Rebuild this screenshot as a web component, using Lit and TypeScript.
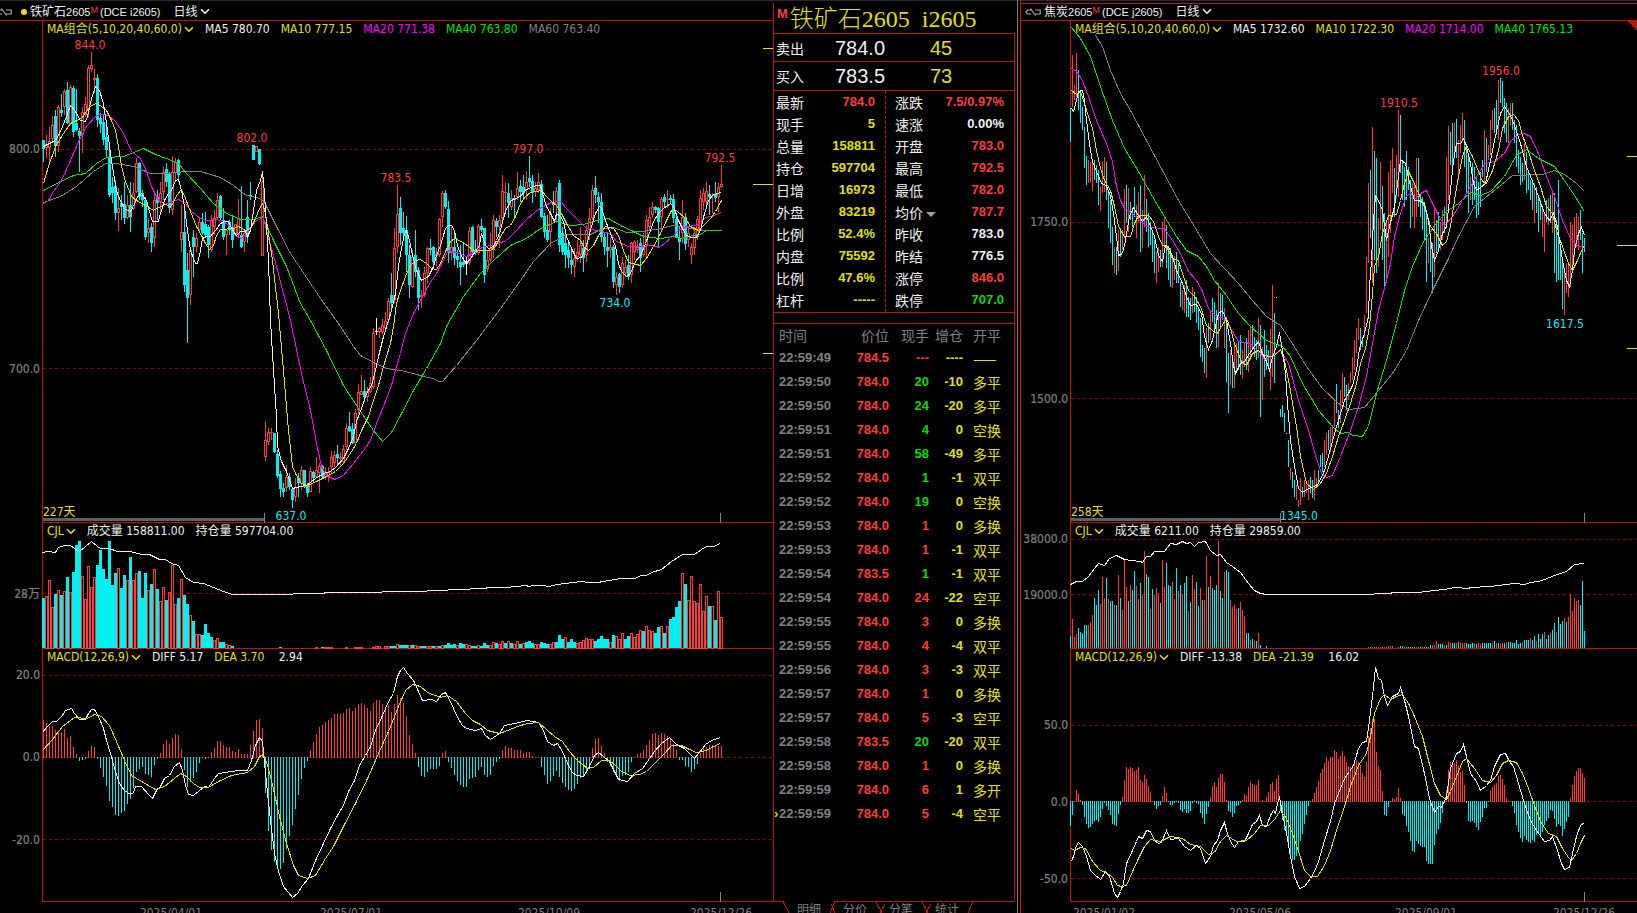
import { LitElement, html, svg, css } from "lit";
import { customElement, property } from "lit/decorators.js";

/* ---------- data types ---------- */

interface Scale {
  ox: number; // origin and units per pixel on each axis
  kx: number;
  oy: number;
  ky: number;
}
interface Trace {
  tone: string;
  scale: Scale;
  points: string;
}
interface Mark {
  text: string;
  tone: string;
  x: number;
  y: number;
}
interface Pane {
  top: number;
  height: number;
  legend: { text: string; tone: string; menu?: boolean }[];
  grid: { y: number; text: string }[];
  bars: Record<string, string>;
  traces: Trace[];
  marks: Mark[];
  ticks: number[];
  range?: { end: number; text: string };
  alerts?: { y: number; w: number }[];
}
interface ChartData {
  name: string;
  code: string;
  active: boolean;
  x0: number;
  width: number;
  panes: Pane[];
  dates: { x: number; text: string }[];
}

/* ---------- geometry helpers ---------- */

const rect = (x: number, y: number, w: number, h: number) =>
  h > 0 ? `M${x} ${y}h${w}v${h}h${-w}z` : "";

const hollow = (x: number, y: number, w: number, h: number) =>
  h < 3
    ? rect(x, y, w, Math.max(h, 1))
    : rect(x, y, w, 1) + rect(x, y + h - 1, w, 1) + rect(x, y + 1, 1, h - 2) + rect(x + w - 1, y + 1, 1, h - 2);

const toneOf: Record<string, string> = { r: "up", c: "down", w: "flat" };

/** Vertices sit on pixel centres, so that flat runs stay one solid row. */
function polyline(t: Trace): string {
  const s = t.scale;
  return t.points
    .split(" ")
    .map((p) => {
      const [x, y] = p.split(",").map(Number);
      return `${Math.floor(s.ox + x / s.kx) + 0.5},${Math.floor(s.oy + y / s.ky) + 0.5}`;
    })
    .join(" ");
}

/** Rows of "tone high top bottom low" on a 1/3 px grid. */
function candles(rows: string, x0: number, pitch: number) {
  const out: Record<string, string> = { up: "", down: "", flat: "" };
  rows.split(",").forEach((row, i) => {
    const tone = toneOf[row[0]];
    const [hi, top, bottom, lo] = row.slice(1).split(" ").map((v) => Math.round(Number(v) / 3));
    const x = x0 + i * pitch;
    const h = Math.max(bottom - top, 1);
    out[tone] += rect(x, hi, 1, top - hi) + rect(x, top + h, 1, lo - top - h);
    out[tone] += tone === "down" ? rect(x - 1, top, 3, h) : hollow(x - 1, top, 3, h);
  });
  return out;
}

/** Rows of "tone high low"; an empty row leaves a gap. */
function sticks(rows: string, x0: number, pitch: number) {
  const out: Record<string, string> = { up: "", down: "", flat: "" };
  rows.split(",").forEach((row, i) => {
    if (!row) return;
    const [hi, lo] = row.slice(1).split(" ").map((v) => Math.round(Number(v) / 3));
    out[toneOf[row[0]]] += rect(x0 + i * pitch, hi, 1, Math.max(lo - hi, 1));
  });
  return out;
}

/** Volume columns: tone and top, standing on the baseline 384. */
function volume(rows: string, x0: number, pitch: number, wide: boolean) {
  const out: Record<string, string> = { up: "", down: "" };
  rows.split(" ").forEach((row, i) => {
    if (row === "-") return;
    const y = 520 + Math.round(Number(row.slice(1)) / 3);
    const h = 648 - y;
    const x = x0 + i * pitch;
    const tone = toneOf[row[0]];
    if (!wide) out[tone] += rect(x, y, 1, h);
    else out[tone] += tone === "up" ? hollow(x - 1, y, 3, h + 1) : rect(x - 1, y, 3, h);
  });
  return out;
}

function histogram(rows: string, x0: number, pitch: number, zero: number) {
  const out: Record<string, string> = { up: "", down: "" };
  rows.split(" ").forEach((row, i) => {
    const y = 520 + Math.round(Number(row) / 3);
    const x = x0 + i * pitch;
    if (y <= zero) out.up += rect(x, y, 1, zero - y + 1);
    else out.down += rect(x, zero, 1, y - zero);
  });
  return out;
}

/* ---------- iron ore ---------- */

const ORE_PRICE: Scale = { ox: 0, kx: 3, oy: 0, ky: 3 };
const ORE_LOWER: Scale = { ox: 0, kx: 2.01, oy: 520, ky: 3 };

const oreCandles =
  "c420 420 447 485,r405 432 445 475,r381 423 445 490,r347 375 418 428,c330 348 437 470,r315 320 437 455,c282 330 338 350,r268 273 320 345,c246 270 370 372,r255 260 372 375,c258 265 395 410,c268 370 390 392,c385 393 408 515,r320 335 405 460,r290 312 345 350,r195 205 330 350,r156 195 207 215,r207 233 240 280,c222 235 360 380,c340 355 372 400,c345 365 420 435,c380 410 450 470,c450 470 585 590,c530 560 580 610,c540 558 640 660,r565 625 640 692,c585 610 622 660,c545 612 655 672,r585 615 655 658,c545 615 650 695,r550 580 628 630,r474 488 575 580,c485 488 590 600,c570 580 600 620,c590 600 712 720,r655 685 700 730,c670 680 730 755,r575 600 715 740,c570 590 610 660,r545 580 605 640,r500 515 575 600,c488 508 545 560,c515 518 625 640,r468 515 630 645,r475 485 520 540,c478 480 525 545,r615 695 720 755,c615 695 855 875,c760 810 895 1030,r740 750 885 915,c690 710 740 830,r700 715 740 755,r655 665 690 700,c640 665 700 705,c635 672 705 715,c675 680 735 775,r645 660 750 755,r630 655 680 705,r580 600 655 660,c585 587 655 660,c625 660 710 720,r690 690 705 765,c660 665 690 705,c645 680 720 745,r672 672 705 705,r598 655 705 710,c558 705 740 745,r690 700 725 755,c600 650 710 730,c545 585 592 600,c435 435 480 480,r438 438 455 455,c447 447 492 495,r512 545 768 768,r483 540 590 602,r505 517 545 555,r505 517 520 540,c518 520 575 580,c570 582 648 655,c632 642 688 712,c670 685 697 712,r615 652 685 695,c638 650 680 690,c680 687 720 743,r655 680 712 725,c640 655 670 712,r618 630 672 690,c630 630 680 685,c668 675 698 710,r622 632 695 695,c632 635 655 665,r590 630 650 655,r608 618 640 698,c615 618 650 655,r620 640 652 660,r622 636 650 665,r573 590 622 640,r572 585 610 620,c555 582 595 615,r575 590 597 615,r555 568 605 612,r490 505 560 570,c457 498 512 515,c490 507 550 552,r448 460 548 552,r372 397 450 462,r345 393 405 405,c360 393 410 425,r380 393 412 425,r350 370 395 400,r203 220 380 388,w173 212 214 225,r200 205 215 235,r178 195 215 225,r155 182 205 215,r115 122 180 190,c38 105 130 155"
    .split(",")
    .map((row, i) =>
      i < 74 ? row : row[0] + row.slice(1).split(" ").map((v) => Number(v) + 780).join(" "),
    )
    .join(",") +
  ",r685 745 900 910,r555 643 740 760,c590 625 700 735,c635 685 700 720,c648 690 765 815,c735 765 855 895,r750 770 860 865,c690 765 815 830,c800 810 895 930,r870 885 892 925,r800 820 885 890,r740 745 820 850,c717 745 750 765,c738 742 785 800,r745 762 768 800,r655 658 765 770,r573 580 650 680,c570 580 620 628,c603 628 760 790,r680 740 760 780,c690 740 775 795,c750 768 780 805,c735 785 800 855,c725 785 795 800,w770 790 793 825,r680 692 790 795,c678 680 755 765,c720 750 760 765,r672 678 760 765,c658 678 690 695,c683 685 825 848,r750 780 808 815,r700 745 780 785,r645 660 750 775,c655 662 682 710,r645 660 680 745,r525 573 655 660,r550 575 580 640,c548 580 610 655,r570 595 620 630,c585 595 600 650,r515 565 590 600,c540 558 575 605,c525 560 580 595,r512 545 570 600,c468 535 545 560,c525 543 580 608,r545 565 575 590,r518 545 570 580,c540 552 650 655,c640 648 695 715,c645 690 720 725,r625 640 695 742,c573 605 615 640,r560 573 615 670,c540 550 735 755,c680 700 755 765,c700 730 765 805,c720 750 775 805,c745 780 795 822,r745 775 800 830,r720 755 770 785,r680 735 765 790,c720 745 775 815,r675 690 765 785,r625 655 690 720,r555 570 655 660,c528 565 585 610,c575 592 605 670,c578 605 710 725,c700 710 740 765,c700 742 752 800,r715 740 750 775,c735 740 845 865,r816 830 855 885,c820 822 862 880,r770 790 855 865,r780 800 820 830,c765 795 830 840,r725 730 825 850,r720 727 755 780,r720 740 750 760,c715 730 775 815,r700 735 765 770,r645 660 735 770,r620 650 680 690,r605 620 645 655,c618 620 630 640,c620 625 665 740,r590 597 650 690,c582 590 605 620,r570 597 600 625,c585 593 600 610,c582 597 655 670,c640 657 710 715,c680 713 725 780,r600 650 700 730,c640 652 732 750,r680 700 720 740,r730 740 765 793,r680 700 745 765,r648 658 710 720,r570 595 690 690,r565 580 605 630,r545 572 605 620,c555 583 592 645,r580 585 588 640,c545 583 595 605,r550 560 590 635,r495 552 560 565";

const oreVolume =
  "c234 r229 r181 r262 c222 r211 c225 r213 c171 r217 c156 c75 c63 r169 r238 r139 r201 r171 c135 c90 c147 c177 c63 c195 c159 r144 c204 c165 r180 c111 r180 r159 c153 c234 c159 r210 c192 r147 c207 r243 r201 c240 r216 r135 r252 c234 r177 c225 c252 r285 c303 r342 r342 c345 c312 c339 c351 r360 r355 c366 c366 r372 r375 c378 - - - - - - - - - - - - - - - c381 - - - - - - - - - - - r381 - c381 r381 r381 r381 - - - - r381 - - r381 r381 r381 - - - r381 r379 r378 - r378 r378 c378 c378 r373 c375 c376 c376 r376 c375 r376 r378 c378 c378 r378 r378 c378 r378 c378 r376 c374 c369 c375 c372 r376 c369 c373 r372 r376 c378 c378 r376 c378 c370 c375 r376 r366 c370 r372 r363 c370 r363 c370 r373 r364 c372 r369 c366 c363 c369 r372 r372 c366 c369 c373 r371 r366 c365 c345 c358 r352 c366 c356 c366 r368 r365 r360 r355 r358 r358 c362 c358 c348 c357 c357 r366 c345 r348 r356 r340 c356 c348 r340 r352 r342 r331 c333 r319 r330 r333 c338 c321 r319 c339 r319 c297 c291 c261 c243 r159 c192 r240 r169 r243 r249 r192 r273 r228 c258 r258 c300 r213 r291";

const oreHist =
  "600 609 617 617 630 636 636 628 654 648 681 702 723 720 717 693 678 681 717 744 770 798 843 861 885 888 879 873 852 837 805 756 747 741 762 765 770 735 717 699 672 660 672 654 642 645 687 750 801 786 774 756 730 715 717 715 697 684 663 663 675 681 681 693 697 687 702 702 702 675 633 600 597 624 819 933 990 1026 1047 1047 1028 987 948 915 867 825 777 744 723 690 666 642 621 615 606 600 594 582 582 582 579 567 564 573 564 552 549 555 563 573 549 540 540 552 564 555 576 552 525 534 548 588 645 672 699 741 768 770 755 747 747 747 738 699 692 726 744 765 782 795 801 801 777 774 770 750 740 765 770 765 738 726 717 690 678 684 684 690 690 690 699 696 696 708 712 712 740 765 792 783 768 753 770 789 801 810 812 806 792 775 770 760 740 684 657 654 677 698 726 738 756 770 783 768 765 755 726 712 702 699 690 675 660 642 639 645 639 642 648 654 672 690 720 720 738 741 756 748 732 698 685 681 675 675 678 678 678";

const ore: ChartData = {
  name: "铁矿石",
  code: "(DCE i2605)",
  active: true,
  x0: 43,
  width: 730,
  panes: [
    {
      top: 21,
      height: 501,
      legend: [
        { text: "MA组合(5,10,20,40,60,0)", tone: "yellow", menu: true },
        { text: "MA5 780.70", tone: "white" },
        { text: "MA10 777.15", tone: "yellow" },
        { text: "MA20 771.38", tone: "magenta" },
        { text: "MA40 763.80", tone: "green" },
        { text: "MA60 763.40", tone: "gray" },
      ],
      grid: [
        { y: 149, text: "800.0" },
        { y: 368, text: "700.0" },
      ],
      bars: candles(oreCandles, 43, 3),
      traces: [
        { tone: "gray", scale: ORE_PRICE, points: "130,608 180,590 230,560 280,515 315,490 350,490 400,500 450,520 500,520 560,515 600,515 660,533 700,555 740,585 770,592 790,600 830,680 870,760 900,805 960,895 1020,980 1060,1040 1080,1065 1120,1088 1160,1105 1200,1112 1240,1120 1270,1128 1300,1135 1315,1144 1328,1145 1370,1095 1430,1020 1500,925 1560,840 1600,785 1650,730 1700,702 1770,702 1800,688 1840,682 1880,697 1930,693 1980,685 2020,675 2060,682 2100,690 2163,690" },
        { tone: "green", scale: ORE_PRICE, points: "130,570 180,545 220,525 255,520 290,490 320,472 370,470 400,458 430,445 465,462 500,475 535,490 560,520 600,565 640,610 680,640 720,658 760,657 787,650 820,720 860,800 900,910 930,960 980,1050 1030,1155 1080,1235 1120,1290 1147,1325 1175,1296 1200,1245 1240,1170 1280,1105 1320,1030 1340,980 1390,890 1440,820 1480,780 1530,735 1580,715 1620,685 1670,665 1710,677 1750,673 1790,660 1825,656 1860,675 1900,695 1930,710 1980,715 2020,708 2040,714 2080,707 2100,702 2120,690 2163,690" },
        { tone: "magenta", scale: ORE_PRICE, points: "130,610 145,600 160,575 185,540 210,480 235,425 260,380 285,350 300,343 325,345 345,365 370,400 395,455 420,475 440,515 455,560 475,600 495,612 515,605 535,597 555,610 575,635 600,655 620,660 650,658 670,665 690,680 710,710 725,714 740,700 755,680 770,660 790,653 800,690 830,800 870,960 905,1120 930,1230 950,1330 965,1400 980,1425 1003,1437 1030,1425 1060,1390 1090,1350 1110,1320 1130,1270 1150,1220 1175,1155 1190,1100 1200,1060 1215,1000 1240,940 1265,895 1285,855 1310,820 1325,790 1345,750 1370,757 1400,770 1430,755 1450,738 1480,735 1520,722 1545,695 1575,660 1605,635 1630,620 1655,607 1680,604 1700,625 1730,655 1760,685 1790,690 1830,700 1850,725 1885,740 1920,738 1955,735 1978,742 2010,715 2035,690 2060,680 2090,675 2110,655 2150,642 2163,636" },
        { tone: "yellow", scale: ORE_PRICE, points: "130,550 145,500 165,440 190,400 210,370 230,360 245,355 260,335 275,315 290,310 305,320 320,330 335,360 345,390 355,440 365,500 375,545 395,590 410,600 435,615 460,630 475,622 495,612 510,618 520,608 530,585 543,568 555,595 570,635 590,680 605,705 615,730 628,748 640,735 650,705 662,688 700,685 715,680 735,692 750,685 765,655 777,625 787,610 795,640 805,700 817,780 835,940 850,1110 865,1290 877,1400 890,1425 905,1450 922,1457 950,1445 980,1430 1005,1415 1030,1390 1055,1355 1070,1330 1085,1290 1105,1250 1120,1200 1135,1155 1150,1100 1160,1070 1172,1030 1180,980 1190,910 1200,870 1215,830 1230,795 1245,780 1262,778 1280,790 1295,805 1308,808 1320,790 1335,755 1350,725 1363,715 1385,725 1405,740 1425,755 1440,750 1470,752 1485,740 1500,710 1515,685 1530,675 1545,650 1560,610 1575,590 1590,578 1625,572 1640,590 1655,605 1670,615 1685,640 1700,670 1720,705 1740,720 1750,740 1765,752 1780,735 1795,705 1815,680 1840,685 1855,705 1870,750 1885,788 1920,795 1940,775 1960,740 1980,700 2000,660 2015,632 2030,630 2055,655 2070,678 2095,690 2110,675 2130,655 2145,635 2165,600" },
        { tone: "white", scale: ORE_PRICE, points: "130,440 165,420 180,395 200,350 212,315 225,335 240,360 255,363 262,350 275,295 285,258 297,270 310,310 320,370 330,460 340,520 350,570 362,605 375,628 390,633 400,620 412,590 425,580 438,600 448,635 458,664 474,664 482,640 492,600 505,580 515,570 525,540 535,538 543,570 552,620 562,690 572,750 585,790 592,790 600,750 607,715 620,710 630,708 645,690 660,670 672,663 685,663 695,685 710,705 722,695 735,695 742,708 750,690 760,630 770,570 780,540 788,515 793,580 798,680 805,780 812,960 820,1110 828,1250 832,1340 845,1385 860,1415 877,1465 900,1460 920,1455 945,1435 970,1420 990,1415 1010,1400 1030,1375 1045,1345 1060,1310 1070,1265 1085,1225 1100,1180 1115,1155 1125,1110 1135,1070 1150,1010 1165,960 1175,930 1185,880 1195,800 1203,745 1213,700 1218,690 1228,720 1238,765 1250,810 1265,842 1285,830 1300,800 1310,765 1322,735 1335,685 1345,675 1355,675 1362,690 1372,735 1385,770 1398,790 1412,775 1425,755 1437,735 1445,700 1455,735 1465,745 1480,740 1490,720 1500,690 1510,655 1520,625 1535,600 1560,590 1575,570 1590,562 1610,555 1620,555 1628,580 1640,620 1650,640 1662,665 1670,640 1680,650 1690,665 1700,710 1715,745 1730,775 1745,773 1760,735 1775,680 1785,640 1797,620 1805,625 1815,660 1830,700 1845,740 1855,790 1865,815 1880,828 1890,820 1905,785 1920,765 1935,730 1950,690 1960,665 1975,640 1990,625 2010,610 2020,618 2035,660 2050,690 2060,705 2075,713 2090,712 2100,690 2112,640 2125,600 2140,582 2155,580 2163,575" },
      ],
      marks: [
        { text: "844.0", tone: "up", x: 90, y: 45 },
        { text: "802.0", tone: "up", x: 252, y: 138 },
        { text: "783.5", tone: "up", x: 396, y: 178 },
        { text: "797.0", tone: "up", x: 528, y: 149 },
        { text: "792.5", tone: "up", x: 720, y: 158 },
        { text: "734.0", tone: "down", x: 615, y: 303 },
        { text: "637.0", tone: "down", x: 291, y: 516 },
      ],
      ticks: [264, 720],
      range: { end: 264, text: "227天" },
      alerts: [
        { y: 48, w: 10 },
        { y: 184, w: 20 },
        { y: 353, w: 10 },
      ],
    },
    {
      top: 523,
      height: 125,
      legend: [
        { text: "CJL", tone: "yellow", menu: true },
        { text: "成交量 158811.00", tone: "white" },
        { text: "持仓量 597704.00", tone: "white" },
      ],
      grid: [{ y: 593, text: "28万" }],
      bars: volume(oreVolume, 43, 3, true),
      traces: [
        { tone: "white", scale: ORE_LOWER, points: "86,97 98,95 112,97 118,82 130,75 142,77 150,85 160,95 172,80 183,64 195,78 202,85 220,85 237,94 262,94 285,102 300,102 320,117 333,119 345,130 358,137 372,172 388,187 410,190 430,203 450,215 467,223 585,223 592,220 650,219 655,217 765,216 770,214 855,213 862,211 885,210 915,207 975,205 980,203 1018,201 1057,197 1065,199 1070,196 1093,196 1102,199 1120,193 1150,187 1170,184 1180,187 1200,186 1225,181 1250,175 1275,174 1290,166 1300,165 1310,156 1330,149 1350,123 1372,104 1395,102 1410,88 1420,79 1435,78 1448,69" },
      ],
      marks: [],
      ticks: [],
    },
    {
      top: 649,
      height: 252,
      legend: [
        { text: "MACD(12,26,9)", tone: "yellow", menu: true },
        { text: "DIFF 5.17", tone: "white" },
        { text: "DEA 3.70", tone: "yellow" },
        { text: " 2.94", tone: "white" },
      ],
      grid: [
        { y: 675, text: "20.0" },
        { y: 757, text: "0.0" },
        { y: 839, text: "-20.0" },
      ],
      bars: histogram(oreHist, 43, 3, 757),
      traces: [
        { tone: "white", scale: ORE_LOWER, points: "86,636 95,620 105,605 113,605 125,585 132,570 143,565 150,580 160,597 172,598 178,580 183,568 190,568 198,590 208,625 215,660 222,700 232,755 240,790 250,810 262,823 268,818 273,800 285,800 298,822 306,834 315,812 322,800 330,775 340,765 350,740 360,727 366,750 372,795 378,822 388,827 400,812 412,800 420,803 432,775 440,759 465,755 480,750 498,750 505,720 513,675 522,652 528,665 535,790 543,900 552,1000 560,1055 570,1100 588,1133 598,1120 608,1095 620,1075 635,1020 650,970 665,925 678,885 690,855 700,815 712,780 722,735 735,705 745,680 755,630 768,585 780,545 790,520 798,470 805,450 812,441 820,460 832,480 842,515 850,540 868,537 878,545 888,522 896,517 905,545 918,585 930,615 938,625 955,630 967,625 975,645 985,658 1003,640 1015,615 1035,610 1060,600 1082,607 1092,630 1100,665 1113,675 1120,670 1130,695 1140,730 1150,758 1158,767 1172,768 1182,745 1195,705 1203,697 1213,710 1225,725 1235,755 1243,777 1262,784 1275,760 1292,745 1302,725 1315,695 1330,670 1345,652 1360,672 1375,685 1395,715 1405,698 1418,672 1430,662 1448,652" },
        { tone: "yellow", scale: ORE_LOWER, points: "86,690 105,657 125,620 150,592 175,595 190,583 205,590 220,615 235,665 250,720 265,765 285,785 312,807 330,800 350,775 363,760 375,770 388,790 400,802 420,803 440,785 465,767 498,757 512,740 522,710 530,702 540,745 552,820 562,890 575,970 590,1035 600,1065 618,1076 635,1065 655,1015 670,980 690,920 715,850 740,770 760,700 780,635 800,560 815,512 830,493 845,500 860,518 885,532 900,527 918,545 935,580 950,602 965,612 980,632 1003,640 1020,630 1040,620 1060,610 1083,607 1100,630 1115,650 1130,665 1145,695 1160,722 1180,744 1192,742 1210,720 1225,720 1238,735 1250,755 1268,765 1285,762 1300,755 1315,730 1335,700 1350,677 1370,677 1385,688 1400,698 1420,690 1435,678 1448,669" },
      ],
      marks: [],
      ticks: [720],
    },
  ],
  dates: [
    { x: 171, text: "2025/04/01" },
    { x: 351, text: "2025/07/01" },
    { x: 549, text: "2025/10/09" },
    { x: 721, text: "2025/12/26" },
  ],
};

/* ---------- coke ---------- */

const COKE_PRICE: Scale = { ox: 1010, kx: 2.5, oy: 0, ky: 3 };
const COKE_LOWER: Scale = { ox: 1010, kx: 2.5, oy: 520, ky: 3 };

const cokeSticks =
  "c325 425,r165 320,r255 300,r160 290,c210 330,c280 370,c320 390,c380 505,c468 555,r480 550,r485 545,r488 573,c480 540,c495 550,c510 615,r560 632,r487 580,r470 575,c487 600,c575 685,c600 728,c680 795,r740 820,c740 825,r690 813,c685 770,r690 750,r568 715,c555 670,r565 695,c605 660,c625 680,c560 650,r615 713,r575 665,c555 755,r630 745,r525 680,c597 695,c640 740,c665 735,c690 785,c720 820,r755 850,r742 815,c750 800,r665 800,r650 745,c675 805,c740 840,c745 860,r765 865,r768 840,c755 850,c790 850,c845 920,r870 930,r855 940,c840 950,c890 950,c895 960,r860 940,c875 935,c890 970,c920 990,c955 1070,c1035 1085,c1045 1120,r985 1135,c970 1030,r930 1020,c895 965,c905 985,c930 1045,r850 1040,c878 985,c885 960,r925 1045,c950 1145,c1060 1240,r1050 1155,c1065 1165,r1025 1165,r1030 1110,c1025 1110,c1005 1125,r1050 1135,r1030 1100,c1015 1110,r990 1115,r978 1080,c975 1050,c1010 1070,c1020 1080,r955 1075,c975 1250,r1040 1200,c990 1130,c1035 1110,c1050 1100,r988 1170,r855 1130,c940 1150,w890 893,,c1228 1250,c1215 1250,c1240 1295,w1299 1301,c1320 1400,r1405 1440,c1415 1465,c1440 1492,r1455 1500,r1500 1520,r1435 1515,c1460 1490,r1440 1490,r1455 1480,r1440 1500,c1430 1480,c1440 1495,r1410 1500,r1435 1460,c1410 1450,c1365 1400,c1360 1415,r1320 1400,r1300 1365,c1290 1350,r1280 1355,r1275 1330,r1200 1280,c1152 1240,c1230 1285,r1170 1270,r1120 1210,c1130 1190,c1155 1230,r1150 1200,r1115 1150,r1070 1140,r1020 1110,r985 1060,r955 1020,c985 1050,c1010 1040,r945 1010,r770 940,r550 790,c510 715,r380 850,c452 780,c475 820,r655 800,r485 690,c558 780,c640 870,r670 850,r515 770,r482 700,r443 580,c505 650,r465 595,r330 590,c345 520,c487 600,c500 620,c452 600,c500 570,c540 685,r550 650,r545 685,r475 650,c475 620,c580 650,c590 690,c605 720,c640 845,r715 790,c700 815,c730 880,r620 830,c660 760,c635 750,r665 750,r630 720,c620 700,r470 680,r378 600,c395 495,c370 500,r368 460,c357 475,r420 540,r375 460,r340 420,c360 500,c440 580,c465 640,r530 600,c490 615,c500 600,c530 655,c545 645,c515 620,c480 530,r390 555,c415 515,r435 480,r360 465,r330 390,c325 400,c300 405,r240 420,c235 310,c242 320,c295 400,c310 425,r325 430,r310 375,c308 390,c360 430,c375 500,c450 520,c470 555,c490 545,r430 540,c455 580,c510 570,c540 600,c545 630,r550 670,c560 640,c595 695,c600 660,r620 710,r635 755,c600 665,r595 675,c585 670,r570 700,c580 820,c660 845,c540 840,c745 840,c770 928,r800 945,r790 880,r795 890,r665 860,r675 800,r650 770,r640 740,r650 750,c630 720,c700 820,c715 755";

const cokeVolume =
  "c348 r297 r351 r342 c324 c336 c339 c315 c315 r315 r306 r285 c234 c255 c210 r252 r171 r234 c174 r237 c243 c243 r255 c255 r165 c234 r270 r117 r201 c243 r195 c210 c153 r198 r237 c189 r225 r93 c162 c171 r267 c207 r225 r204 r219 c249 r120 r201 c129 c195 c198 r186 r237 c144 r213 c195 r222 c189 c168 r273 c246 r165 r207 c186 c258 r204 c240 r240 r108 c201 r168 c204 c210 c195 r63 c213 c234 r156 c150 c156 r240 r261 r255 r267 c264 r246 r270 r288 c339 c339 r360 c357 r363 c363 r339 c375 - - c378 - - - - - - - - - - - - - - - - - - - - - - - - - - - - - - - - - - - - - - - - - - - - - - - - - - r381 c381 r381 c381 r381 r381 r381 c381 r381 r381 r378 r378 r378 - - r381 c378 c378 c381 c381 c381 c381 c381 c381 r381 c381 r378 c381 c381 c381 c381 c376 r376 r375 r363 c372 c372 c372 r375 c376 r366 r368 c370 c370 r370 c366 r369 r370 r369 c370 c372 c372 c370 r370 c372 r369 r371 c369 c369 c370 c369 c369 r370 c363 r369 c369 r371 r370 c370 r366 c366 c366 c370 c368 c360 c372 c369 r366 c360 c360 c360 r354 c360 c348 r362 c342 c357 c342 r336 c357 c345 r339 c330 c309 r336 c291 c312 c303 r294 c306 r291 r222 r273 r234 r243 r240 c255 c183 c333";

const cokeHist =
  "918 885 842 810 821 840 855 890 912 924 921 912 903 900 906 891 867 848 858 870 885 912 915 918 882 855 832 780 741 747 741 744 753 750 741 780 786 765 777 798 816 844 855 867 858 855 828 801 819 846 855 855 850 846 850 870 876 867 879 879 873 850 840 849 852 879 894 912 882 860 832 798 786 801 774 762 762 786 840 873 876 891 879 858 855 850 840 822 828 801 786 792 795 795 780 842 840 844 832 816 792 786 812 777 765 870 900 930 945 978 1005 1020 1020 1008 999 963 942 912 885 857 845 837 819 801 783 759 747 729 711 723 711 711 690 696 717 708 693 708 726 738 741 735 732 720 726 735 759 771 726 648 624 597 597 696 738 750 813 885 888 861 845 834 837 832 804 834 882 888 918 936 963 993 996 963 972 978 981 981 1023 1032 1032 1032 975 942 927 909 878 850 810 750 726 726 729 720 738 756 753 795 850 903 906 903 909 921 930 906 891 864 864 846 813 800 795 790 768 765 777 795 834 844 844 858 879 915 936 954 966 948 960 966 969 960 966 945 940 945 936 915 903 894 870 873 897 921 912 918 948 927 906 891 834 795 768 753 744 744 759 774";

const coke: ChartData = {
  name: "焦炭",
  code: "(DCE j2605)",
  active: false,
  x0: 1071,
  width: 566,
  panes: [
    {
      top: 21,
      height: 501,
      legend: [
        { text: "MA组合(5,10,20,40,60,0)", tone: "yellow", menu: true },
        { text: "MA5 1732.60", tone: "white" },
        { text: "MA10 1722.30", tone: "yellow" },
        { text: "MA20 1714.00", tone: "magenta" },
        { text: "MA40 1765.13", tone: "green" },
      ],
      grid: [
        { y: 222, text: "1750.0" },
        { y: 398, text: "1500.0" },
      ],
      bars: sticks(cokeSticks, 1070, 2),
      traces: [
        { tone: "gray", scale: COKE_PRICE, points: "213,105 230,140 250,210 275,280 300,330 340,420 380,510 420,600 460,680 500,760 537,805 570,850 605,900 640,950 675,975 700,1020 740,1100 780,1165 820,1210 848,1228 885,1222 920,1170 955,1120 990,1050 1020,960 1055,870 1095,775 1120,710 1160,620 1200,580 1225,555 1255,525 1330,522 1360,510 1385,522 1415,550 1437,575" },
        { tone: "green", scale: COKE_PRICE, points: "153,83 175,115 200,170 225,260 255,360 285,445 320,515 355,590 385,650 415,710 440,750 470,770 490,800 510,840 540,885 570,940 600,980 640,1020 680,1040 700,1070 730,1150 770,1230 805,1280 825,1300 845,1298 855,1307 880,1308 895,1280 915,1180 940,1080 965,970 985,870 1005,800 1030,730 1060,675 1090,635 1120,610 1150,578 1175,585 1200,575 1235,530 1265,465 1290,448 1320,475 1360,500 1385,540 1410,585 1437,635" },
        { tone: "magenta", scale: COKE_PRICE, points: "153,205 165,215 178,235 195,290 215,360 240,430 255,485 265,560 275,600 285,625 305,640 325,665 345,682 385,685 405,720 425,760 445,815 465,840 480,875 495,925 515,950 535,955 550,985 570,1025 600,1030 625,1060 638,1080 655,1065 675,1050 695,1090 720,1200 745,1290 765,1375 778,1420 792,1432 805,1425 825,1370 850,1290 870,1220 890,1130 905,1030 920,930 940,840 950,790 962,710 975,640 990,585 1003,580 1012,598 1025,580 1040,570 1055,610 1070,645 1085,675 1105,650 1130,600 1150,560 1170,520 1188,490 1210,485 1235,460 1250,425 1270,403 1285,400 1300,410 1320,460 1340,530 1360,590 1380,660 1400,715 1420,738 1437,740" },
        { tone: "yellow", scale: COKE_PRICE, points: "153,270 165,283 175,275 185,310 195,350 207,385 215,450 225,505 237,540 250,570 262,620 272,680 285,710 300,710 312,670 322,645 345,645 358,665 370,710 380,735 392,740 405,775 420,780 430,820 445,870 460,890 475,920 490,975 505,990 518,1000 528,980 540,955 550,985 562,1030 578,1085 590,1095 605,1060 620,1050 635,1065 650,1068 662,1065 675,1048 685,1080 700,1170 715,1280 725,1370 740,1450 758,1468 775,1450 790,1420 805,1370 820,1310 835,1260 850,1210 865,1150 875,1090 888,1045 898,980 905,880 912,800 922,770 932,700 945,645 965,642 975,600 985,550 995,515 1008,545 1020,580 1035,620 1050,680 1065,700 1080,735 1090,725 1100,680 1112,600 1122,530 1132,470 1142,435 1155,470 1165,500 1180,545 1192,550 1205,510 1220,450 1232,385 1245,350 1258,343 1270,360 1280,405 1295,455 1310,510 1325,560 1340,620 1355,640 1365,690 1380,740 1395,790 1405,810 1418,780 1430,745 1437,735" },
        { tone: "white", scale: COKE_PRICE, points: "153,325 158,333 165,300 172,275 180,270 186,300 192,360 198,430 205,485 215,515 228,550 240,555 250,590 258,640 265,710 272,765 280,760 288,720 298,650 308,622 320,645 330,665 340,650 350,680 360,710 370,765 380,785 388,735 396,738 405,770 415,810 430,850 440,890 450,915 465,912 478,940 485,1010 495,1048 505,1020 515,965 522,940 530,930 540,960 550,1030 558,1095 564,1120 575,1090 585,1085 598,1060 610,1040 620,1025 630,1060 640,1085 648,1110 655,1070 665,1040 673,998 680,1050 688,1120 693,1210 700,1320 710,1400 720,1465 732,1478 745,1465 760,1460 772,1450 785,1410 800,1345 815,1280 828,1230 835,1200 845,1180 855,1155 865,1110 873,1045 885,1000 895,950 898,860 903,780 908,660 914,585 922,600 932,630 940,720 948,680 960,620 970,530 977,478 988,490 1000,560 1010,600 1022,600 1035,610 1045,660 1053,740 1060,780 1070,750 1082,700 1092,680 1100,570 1108,480 1115,430 1125,430 1133,415 1142,440 1150,490 1158,550 1165,570 1175,562 1188,550 1200,480 1212,420 1225,340 1237,320 1250,345 1262,375 1275,430 1290,500 1305,545 1320,590 1335,640 1348,660 1358,640 1368,680 1380,780 1390,840 1398,860 1405,810 1412,750 1420,700 1428,683 1437,705" },
      ],
      marks: [
        { text: "1910.5", tone: "up", x: 1399, y: 103 },
        { text: "1956.0", tone: "up", x: 1501, y: 71 },
        { text: "1617.5", tone: "down", x: 1565, y: 324 },
        { text: "1345.0", tone: "down", x: 1299, y: 516 },
      ],
      ticks: [1280, 1584],
      range: { end: 1280, text: "258天" },
      alerts: [
        { y: 156, w: 10 },
        { y: 245, w: 20 },
        { y: 348, w: 10 },
      ],
    },
    {
      top: 523,
      height: 125,
      legend: [
        { text: "CJL", tone: "yellow", menu: true },
        { text: "成交量 6211.00", tone: "white" },
        { text: "持仓量 29859.00", tone: "white" },
      ],
      grid: [
        { y: 539, text: "38000.0" },
        { y: 594, text: "19000.0" },
      ],
      bars: volume(cokeVolume, 1070, 2, false),
      traces: [
        { tone: "white", scale: COKE_LOWER, points: "151,192 165,185 180,183 195,170 210,145 222,130 235,137 248,115 265,105 285,118 300,122 325,125 332,127 340,110 350,110 360,93 385,93 400,70 415,73 430,64 440,70 450,68 460,78 470,66 488,64 500,90 515,105 525,103 540,128 555,140 575,158 595,190 612,210 625,220 640,223 908,223 912,220 950,219 955,217 1020,217 1060,212 1085,209 1110,202 1145,204 1150,202 1200,198 1260,190 1285,193 1300,186 1320,184 1335,178 1360,165 1390,155 1412,134 1437,130" },
      ],
      marks: [],
      ticks: [],
    },
    {
      top: 649,
      height: 252,
      legend: [
        { text: "MACD(12,26,9)", tone: "yellow", menu: true },
        { text: "DIFF -13.38", tone: "white" },
        { text: "DEA -21.39", tone: "yellow" },
        { text: " 16.02", tone: "white" },
      ],
      grid: [
        { y: 725, text: "50.0" },
        { y: 801, text: "0.0" },
        { y: 878, text: "-50.0" },
      ],
      bars: histogram(cokeHist, 1070, 2, 801),
      traces: [
        { tone: "white", scale: COKE_LOWER, points: "153,1025 160,1000 165,975 172,966 182,980 190,1010 200,1050 212,1062 225,1078 238,1055 248,1070 255,1100 262,1120 268,1133 275,1115 283,1090 292,1030 305,990 317,965 322,948 332,955 342,930 352,935 360,960 370,970 378,968 390,932 400,957 420,955 435,980 450,992 465,975 475,985 489,1030 500,1010 508,975 518,960 527,930 535,908 542,930 550,965 562,983 572,965 585,965 595,940 605,912 615,905 623,885 630,915 642,918 650,885 658,870 663,880 668,850 673,832 680,880 690,940 700,1010 712,1070 724,1105 735,1100 750,1075 762,1055 772,1025 785,960 800,905 812,850 822,820 835,775 848,755 858,735 870,685 880,668 890,665 898,600 905,530 914,442 920,475 928,480 936,530 943,555 955,530 970,520 975,503 985,540 997,590 1012,680 1020,685 1035,760 1048,835 1060,878 1070,858 1078,862 1090,830 1102,745 1115,700 1125,695 1134,673 1142,710 1150,760 1165,785 1175,810 1190,795 1200,780 1212,740 1227,702 1238,700 1248,725 1258,740 1270,790 1285,850 1300,900 1315,930 1335,965 1348,960 1355,950 1368,990 1378,1030 1385,1047 1398,1043 1405,1000 1415,950 1425,915 1437,907" },
        { tone: "yellow", scale: COKE_LOWER, points: "153,985 162,992 175,982 188,985 205,1025 225,1052 240,1057 255,1072 268,1095 278,1100 290,1095 305,1055 320,1015 335,980 352,957 375,963 400,950 430,955 450,973 475,978 497,1004 510,998 525,965 542,945 565,965 590,962 610,940 625,917 645,915 662,898 677,872 690,895 705,940 720,995 735,1050 750,1070 768,1068 785,1035 800,990 815,930 835,860 850,800 870,735 890,700 900,650 912,580 925,535 935,522 950,537 965,530 980,522 995,550 1010,590 1030,650 1045,720 1060,790 1075,825 1090,837 1100,815 1115,770 1130,725 1142,715 1160,745 1180,780 1200,788 1215,765 1232,730 1245,722 1265,727 1280,760 1295,805 1310,855 1325,905 1345,940 1365,950 1380,985 1395,1012 1403,1020 1415,1000 1425,970 1437,947" },
      ],
      marks: [],
      ticks: [1584],
    },
  ],
  dates: [
    { x: 1104, text: "2025/01/02" },
    { x: 1260, text: "2025/05/06" },
    { x: 1426, text: "2025/09/01" },
    { x: 1584, text: "2025/12/26" },
  ],
};

/* ---------- quote data ---------- */

const stats: [string, string, string, string, string, string][] = [
  ["最新", "784.0", "up", "涨跌", "7.5/0.97%", "up"],
  ["现手", "5", "yellow", "速涨", "0.00%", "white"],
  ["总量", "158811", "yellow", "开盘", "783.0", "up"],
  ["持仓", "597704", "yellow", "最高", "792.5", "up"],
  ["日增", "16973", "yellow", "最低", "782.0", "up"],
  ["外盘", "83219", "yellow", "均价", "787.7", "up"],
  ["比例", "52.4%", "yellow", "昨收", "783.0", "white"],
  ["内盘", "75592", "yellow", "昨结", "776.5", "white"],
  ["比例", "47.6%", "yellow", "涨停", "846.0", "up"],
  ["杠杆", "-----", "yellow", "跌停", "707.0", "fall"],
];

const trades: [string, string, string, string, string, string][] = [
  ["22:59:49", "784.5", "---", "up", "----", "——"],
  ["22:59:50", "784.0", "20", "fall", "-10", "多平"],
  ["22:59:50", "784.0", "24", "fall", "-20", "多平"],
  ["22:59:51", "784.0", "4", "fall", "0", "空换"],
  ["22:59:51", "784.0", "58", "fall", "-49", "多平"],
  ["22:59:52", "784.0", "1", "fall", "-1", "双平"],
  ["22:59:52", "784.0", "19", "fall", "0", "空换"],
  ["22:59:53", "784.0", "1", "up", "0", "多换"],
  ["22:59:53", "784.0", "1", "up", "-1", "双平"],
  ["22:59:54", "783.5", "1", "fall", "-1", "双平"],
  ["22:59:54", "784.0", "24", "up", "-22", "空平"],
  ["22:59:55", "784.0", "3", "up", "0", "多换"],
  ["22:59:55", "784.0", "4", "up", "-4", "双平"],
  ["22:59:56", "784.0", "3", "up", "-3", "双平"],
  ["22:59:57", "784.0", "1", "up", "0", "多换"],
  ["22:59:57", "784.0", "5", "up", "-3", "空平"],
  ["22:59:58", "783.5", "20", "fall", "-20", "双平"],
  ["22:59:58", "784.0", "1", "up", "0", "多换"],
  ["22:59:59", "784.0", "6", "up", "1", "多开"],
  ["22:59:59", "784.0", "5", "up", "-4", "空平"],
];

/* ---------- shared styles ---------- */

const palette = css`
  :host {
    --frame: #be140a;
    --up: #ff3c39;
    --down: #00f0f0;
    --fall: #00dc00;
    --green: #00e600;
    --yellow: #e1e100;
    --magenta: #ff00ff;
    --white: #f0f0f0;
    --gray: #808080;
    font-family: "DejaVu Sans Condensed", "Noto Sans CJK SC", sans-serif;
    font-size: 12px;
    color: var(--white);
  }
  * {
    box-sizing: border-box;
  }
  button {
    margin: 0;
    padding: 0;
    border: 0;
    background: none;
    color: inherit;
    font: inherit;
    cursor: pointer;
  }
  .up { color: var(--up); }
  .down { color: var(--down); }
  .flat { color: var(--white); }
  .fall { color: var(--fall); }
  .green { color: var(--green); }
  .yellow { color: var(--yellow); }
  .magenta { color: var(--magenta); }
  .white { color: var(--white); }
  .gray { color: var(--gray); }
`;

const chevron = html`<svg class="chevron" viewBox="0 0 10 7" width="10" height="7" aria-hidden="true">
  <path d="M1 1.2 5 5.2 9 1.2" fill="none" stroke="currentColor" stroke-width="1.6" />
</svg>`;

/* ---------- chart window ---------- */

@customElement("chart-window")
export class ChartWindow extends LitElement {
  @property({ attribute: false }) chart!: ChartData;

  static styles = [
    palette,
    css`
      :host {
        display: grid;
        grid-template-rows: 21px 502fr 126fr 253fr 11px;
        min-width: 0;
        min-height: 0;
        overflow: hidden;
      }
      .title {
        display: flex;
        align-items: center;
        padding: 3px 0 0 4px;
        gap: 3px;
        border-bottom: 1px solid var(--frame);
        font: 11px/16px "Liberation Sans", "Noto Sans CJK SC", sans-serif;
        white-space: nowrap;
      }
      .title.active {
        padding-left: 0;
      }
      .broken {
        flex: none;
      }
      .lamp {
        width: 6px;
        height: 6px;
        margin: 0 0 0 6px;
        border-radius: 50%;
        background: var(--yellow);
      }
      .name {
        display: flex;
        align-items: center;
        font-size: 11px;
        font-weight: 400;
        margin: 0;
      }
      .goods {
        font-size: 12px;
      }
      .mark {
        align-self: flex-start;
        color: var(--up);
        font-size: 9px;
        line-height: 12px;
        margin-right: 2px;
      }
      .period {
        display: flex;
        align-items: center;
        gap: 2px;
        margin-left: 10px;
        font-size: 12px;
      }
      .pane {
        display: grid;
        grid-template-columns: var(--axis) 1fr;
        min-height: 0;
      }
      .scale {
        position: relative;
        color: var(--gray);
        -webkit-text-stroke: 0.2px var(--gray);
      }
      .level {
        position: absolute;
        right: 2px;
        line-height: 16px;
        transform: translateY(-50%);
      }
      .plot {
        position: relative;
        border-left: 1px solid var(--frame);
        border-bottom: 1px solid var(--frame);
        min-height: 0;
      }
      .drawing {
        position: absolute;
        inset: 0;
        width: 100%;
        height: 100%;
        overflow: visible;
        shape-rendering: crispEdges;
      }
      .drawing path {
        fill: currentColor;
      }
      .drawing polyline {
        fill: none;
        stroke: currentColor;
        stroke-width: 1;
        vector-effect: non-scaling-stroke;
      }
      .corner {
        color: var(--frame);
      }
      .grid {
        stroke: #8c0000;
        stroke-dasharray: 3 3;
        vector-effect: non-scaling-stroke;
      }
      .legend {
        position: absolute;
        top: 0;
        left: 4px;
        display: flex;
        gap: 11px;
        line-height: 16px;
        white-space: pre;
      }
      .legend button {
        display: flex;
        align-items: center;
        gap: 2px;
        line-height: 16px;
      }
      .callout {
        position: absolute;
        line-height: 16px;
        transform: translate(-50%, -50%);
      }
      .days {
        position: absolute;
        left: 0;
        bottom: 2px;
        line-height: 16px;
      }
      .dates {
        position: relative;
        margin-left: calc(var(--axis) + 1px);
        color: var(--gray);
        overflow: hidden;
      }
      .date {
        position: absolute;
        top: 3px;
        line-height: 16px;
        transform: translateX(-50%);
      }
    `,
  ];

  private xPercent(x: number) {
    return `${(((x - this.chart.x0) / this.chart.width) * 100).toFixed(3)}%`;
  }

  private renderPane(pane: Pane) {
    const { x0, width } = this.chart;
    const bottom = pane.top + pane.height;
    const yPercent = (y: number) => `${(((y - pane.top) / pane.height) * 100).toFixed(3)}%`;
    return html`<section class="pane">
      <div class="scale">
        ${pane.grid.map((g) => html`<span class="level" style="top:${yPercent(g.y)}">${g.text}</span>`)}
      </div>
      <div class="plot">
        <svg class="drawing" viewBox="${x0} ${pane.top} ${width} ${pane.height}" preserveAspectRatio="none" aria-hidden="true">
          ${pane.grid.map(
            (g) => svg`<line class="grid" x1=${x0} x2=${x0 + width} y1=${g.y + 0.5} y2=${g.y + 0.5} />`,
          )}
          ${Object.entries(pane.bars).map(([tone, d]) => svg`<path class=${tone} d=${d} />`)}
          ${pane.traces.map((t) => svg`<polyline class=${t.tone} points=${polyline(t)} />`)}
          ${pane.range
            ? svg`<rect x=${x0} y=${bottom - 4} width=${pane.range.end - x0} height="3" fill="#606060" />`
            : null}
          ${pane.ticks.map((x) => svg`<path class="gray" d=${rect(x, bottom - 9, 1, 10)} />`)}
          ${(pane.alerts ?? []).map((a) => svg`<path class="yellow" d=${rect(x0 + width - a.w, a.y, a.w, 1)} />`)}
          ${pane.alerts && !this.chart.active
            ? svg`<path class="corner" d="M${x0 + width - 10} ${pane.top}h10v10z" />`
            : null}
        </svg>
        <div class="legend">
          ${pane.legend.map((l) =>
            l.menu
              ? html`<button class=${l.tone} type="button">${l.text}${chevron}</button>`
              : html`<span class=${l.tone}>${l.text}</span>`,
          )}
        </div>
        ${pane.marks.map(
          (m) =>
            html`<span class="callout ${m.tone}" style="left:${this.xPercent(m.x)};top:${yPercent(m.y)}">${m.text}</span>`,
        )}
        ${pane.range ? html`<span class="days yellow">${pane.range.text}</span>` : null}
      </div>
    </section>`;
  }

  render() {
    const c = this.chart;
    return html`
      <header class="title ${c.active ? "active" : ""}">
        <svg class="broken" width=${c.active ? 12 : 16} height="10" viewBox=${c.active ? "4 0 12 10" : "0 0 16 10"} aria-hidden="true">
          <path d="M6 3H2.5L.8 5 2.5 7H6M5.5 1.5 10.5 8.5M10 3H15.2V7H10" fill="none" stroke="#a8a8a8" stroke-width="1.2" />
        </svg>
        ${c.active ? html`<span class="lamp"></span>` : null}
        <h2 class="name"><span class="goods">${c.name}</span><span>2605</span><span class="mark">M</span><span>${c.code}</span></h2>
        <button class="period" type="button">日线${chevron}</button>
      </header>
      ${c.panes.map((p) => this.renderPane(p))}
      <footer class="dates">
        ${c.dates.map((d) => html`<span class="date" style="left:${this.xPercent(d.x)}">${d.text}</span>`)}
      </footer>
    `;
  }
}

/* ---------- quote panel ---------- */

@customElement("quote-panel")
export class QuotePanel extends LitElement {
  static styles = [
    palette,
    css`
      :host {
        --num: bold 13px/22px "Liberation Sans", sans-serif;
        display: flex;
        flex-direction: column;
        min-height: 0;
        padding-top: 3px;
        overflow: hidden;
        font-family: "Noto Sans CJK SC", sans-serif;
        font-size: 14px;
      }
      .box {
        flex: 1;
        min-height: 0;
        overflow: hidden;
        border-left: 1px solid var(--frame);
      }
      .headline {
        display: flex;
        align-items: flex-start;
        gap: 2px;
        height: 30px;
        padding-left: 3px;
        margin: 0;
        color: var(--yellow);
        font: 24px/32px "Liberation Serif", "Noto Sans CJK SC", serif;
        font-weight: 300;
        white-space: pre;
      }
      .main {
        color: var(--up);
        font: bold 13px/22px "Liberation Sans", sans-serif;
      }
      .framed {
        border-right: 1px solid var(--frame);
      }
      .depth {
        display: grid;
        grid-template-columns: 59px 81px 1fr;
        align-items: center;
        height: 28px;
        padding-left: 2px;
        border-top: 1px solid var(--frame);
      }
      .depth + .depth {
        height: 29px;
      }
      .big {
        font: 20px/24px "Liberation Sans", sans-serif;
      }
      .size {
        padding-left: 14px;
      }
      .stats {
        display: grid;
        grid-template-columns: 111px 1fr;
        border-top: 1px solid var(--frame);
        border-bottom: 1px solid var(--frame);
      }
      .column {
        margin: 0;
        padding: 0 10px 1px 2px;
      }
      .column + .column {
        padding-left: 9px;
        border-left: 1px dashed var(--frame);
      }
      .row {
        display: flex;
        justify-content: space-between;
        align-items: center;
        height: 22px;
      }
      dt {
        display: flex;
        align-items: center;
        gap: 3px;
        line-height: 22px;
      }
      dd {
        margin: 0;
        font: var(--num);
      }
      .drop {
        border: 5px solid transparent;
        border-top-color: #a0a0a0;
        border-bottom: 0;
        margin-top: 5px;
      }
      .spacer {
        height: 10px;
      }
      .tape {
        flex: 1;
        border-top: 1px solid var(--frame);
      }
      table {
        width: 100%;
        border-collapse: collapse;
        table-layout: fixed;
      }
      th {
        height: 22px;
        padding: 0;
        color: var(--gray);
        font-weight: 400;
        line-height: 22px;
        text-align: right;
      }
      td {
        height: 24px;
        padding: 0;
        font: var(--num);
        text-align: right;
        white-space: nowrap;
      }
      th:first-child,
      td:first-child {
        width: 62px;
        padding-left: 5px;
        text-align: left;
        color: var(--gray);
      }
      .now td:first-child {
        padding-left: 0;
      }
      .cursor {
        display: inline-block;
        width: 5px;
      }
      .w-price { width: 53px; }
      .w-volume { width: 40px; }
      .w-change { width: 34px; }
      th:last-child,
      td:last-child {
        padding-left: 10px;
        text-align: left;
        font: 14px/22px "Noto Sans CJK SC", sans-serif;
      }
      .inner {
        display: flex;
        flex-direction: column;
        height: 100%;
      }
      .tabs {
        position: relative;
        flex: none;
        display: flex;
        gap: 22px;
        height: 12px;
        padding-left: 24px;
        overflow: hidden;
        color: var(--gray);
        font-size: 12px;
        line-height: 16px;
      }
      .tabs button {
        position: relative;
        align-self: flex-start;
        height: 16px;
        color: var(--gray);
        white-space: nowrap;
      }
      .edges {
        position: absolute;
        inset: 0;
        fill: none;
        stroke: var(--frame);
        shape-rendering: crispEdges;
      }
    `,
  ];

  private column(offset: 0 | 3) {
    return html`<dl class="column">
      ${stats.map((s) => {
        const label = s[offset];
        return html`<div class="row">
          <dt>${label}${label === "均价" ? html`<span class="drop"></span>` : null}</dt>
          <dd class=${s[offset + 2]}>${s[offset + 1]}</dd>
        </div>`;
      })}
    </dl>`;
  }

  render() {
    return html`
      <div class="box" lang="zh-CN">
        <div class="inner">
          <h1 class="headline"><span class="main">M</span><span>铁矿石2605  i2605</span></h1>
          <div class="depth framed"><span>卖出</span><span class="big white">784.0</span><span class="big size yellow">45</span></div>
          <div class="depth framed"><span>买入</span><span class="big white">783.5</span><span class="big size yellow">73</span></div>
          <div class="stats framed">${this.column(0)}${this.column(3)}</div>
          <div class="spacer framed"></div>
          <div class="tape framed">
            <table>
              <thead>
                <tr>
                  <th>时间</th>
                  <th class="w-price">价位</th>
                  <th class="w-volume">现手</th>
                  <th class="w-change">增仓</th>
                  <th>开平</th>
                </tr>
              </thead>
              <tbody>
                ${trades.map(
                  (t, i) => html`<tr class=${i === trades.length - 1 ? "now" : ""}>
                    <td>${i === trades.length - 1 ? html`<span class="cursor yellow">›</span>` : null}${t[0]}</td>
                    <td class="up">${t[1]}</td>
                    <td class=${t[3]}>${t[2]}</td>
                    <td class="yellow">${t[4]}</td>
                    <td class="yellow">${t[5]}</td>
                  </tr>`,
                )}
              </tbody>
            </table>
          </div>
        </div>
      </div>
      <nav class="tabs">
        <svg class="edges" width="242" height="12" viewBox="0 0 242 12" aria-hidden="true">
          <path d="M0 .5H10L16 12M57 12 62 .5H241M58 3 62 12M103 1 109 12M107 12 112 3M149 1 155 12M153 12 158 3M195 12 200 1" />
        </svg>
        <button type="button">明细</button>
        <button type="button">分价</button>
        <button type="button">分笔</button>
        <button type="button">统计</button>
      </nav>
    `;
  }
}

/* ---------- page ---------- */

@customElement("app-root")
export class AppRoot extends LitElement {
  static styles = [
    palette,
    css`
      :host {
        display: grid;
        grid-template-columns: minmax(0, 773fr) 242px 5px minmax(0, 617fr);
        height: 100vh;
        overflow: hidden;
        background: #000;
        background-image: linear-gradient(#262a2e, #262a2e);
        background-size: 100% 1px;
        background-repeat: no-repeat;
      }
      .left {
        --axis: 42px;
      }
      .right {
        --axis: 49px;
        position: relative;
        border-left: 1px solid var(--frame);
      }
      .right::before {
        content: "";
        position: absolute;
        inset: 3px 0 auto;
        border-top: 1px solid var(--frame);
      }
      .divider {
        margin: 0 2px;
        background: #808080;
      }
    `,
  ];

  render() {
    return html`
      <chart-window class="left" .chart=${ore}></chart-window>
      <quote-panel></quote-panel>
      <div class="divider"></div>
      <chart-window class="right" .chart=${coke}></chart-window>
    `;
  }
}
